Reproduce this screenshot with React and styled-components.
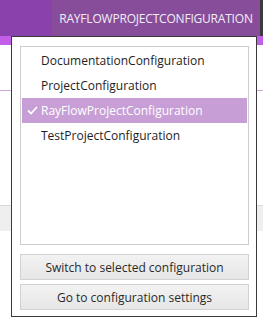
import React, { useState } from 'react';
import styled, { createGlobalStyle } from 'styled-components';

const GlobalStyle = createGlobalStyle`
    html, body {
        margin: 0;
        padding: 0;
        width: 263px;
        height: 319px;
        overflow: hidden;
        background: #ffffff;
        font-family: "Open Sans", "Noto Sans", sans-serif;
    }
`
const Page = styled.div`
    position: relative;
    width: 263px;
    height: 319px;
    background: #ffffff;
`
const TopBar = styled.div`
    display: flex;
    height: 36px;
    background: #8b41ac;
`
const BarSpacer = styled.div`
    flex: 1;
`
const ConfigButton = styled.div`
    display: flex;
    align-items: center;
    justify-content: center;
    width: 208px;
    color: #f2eef5;
    font-size: 12px;
    letter-spacing: -0.2px;
    background: #874d9b;
`
const BarEdge = styled.div`
    width: 3px;
    background: #3c3c3c;
`
const Underline = styled.div`
    height: 9px;
    background: #c25ee8;
`
const Rule = styled.div`
    margin-top: 45px;
    height: 1px;
    background: #cfa6dd;
`
const GreyStrip = styled.div`
    margin-top: 114px;
    height: 25px;
    background: #efefef;
    border-top: 1px solid #d8d8d8;
`
const Popup = styled.div`
    position: absolute;
    left: 11px;
    top: 36px;
    width: 246px;
    height: 281px;
    background: #ffffff;
    border: 1px solid #3a3a3a;
    display: flex;
    flex-direction: column;
    padding: 9px 7px 6px 8px;
    box-sizing: border-box;
    gap: 4px;
`
const List = styled.div`
    flex: 1;
    border: 1px solid #cdcdcd;
    padding: 1px;
    margin-bottom: 5px;
`
const Item = styled.div`
    display: flex;
    align-items: center;
    height: 25px;
    padding-left: 19px;
    position: relative;
    font-size: 12px;
    color: ${p => (p.selected ? '#ffffff' : '#1e1e1e')};
    background: ${p => (p.selected ? '#c79fd6' : 'transparent')};
`
const Check = styled.svg`
    position: absolute;
    left: 5px;
    top: 8px;
`
const Button = styled.div`
    height: 26px;
    box-sizing: border-box;
    display: flex;
    align-items: center;
    justify-content: center;
    font-size: 12px;
    color: #2a2a2a;
    border: 1px solid #d2d2d2;
    background: linear-gradient(#f2f2f2, #e6e6e6);
`

const configs = [
    'DocumentationConfiguration',
    'ProjectConfiguration',
    'RayFlowProjectConfiguration',
    'TestProjectConfiguration',
]

const App = () => {
    const [selected, setSelected] = useState('RayFlowProjectConfiguration')

    return (
        <Page>
            <GlobalStyle />
            <TopBar>
                <BarSpacer />
                <ConfigButton>RAYFLOWPROJECTCONFIGURATION</ConfigButton>
                <BarEdge />
            </TopBar>
            <Underline />
            <Rule />
            <GreyStrip />
            <Popup>
                <List>
                    {configs.map(c => (
                        <Item key={c} selected={c === selected} onClick={() => setSelected(c)}>
                            {c === selected && (
                                <Check width="11" height="9" viewBox="0 0 11 9">
                                    <path d="M1 4.5 L4 7.5 L10 1" fill="none" stroke="#ffffff" strokeWidth="1.8" />
                                </Check>
                            )}
                            {c}
                        </Item>
                    ))}
                </List>
                <Button>Switch to selected configuration</Button>
                <Button>Go to configuration settings</Button>
            </Popup>
        </Page>
    )
}
export default App
